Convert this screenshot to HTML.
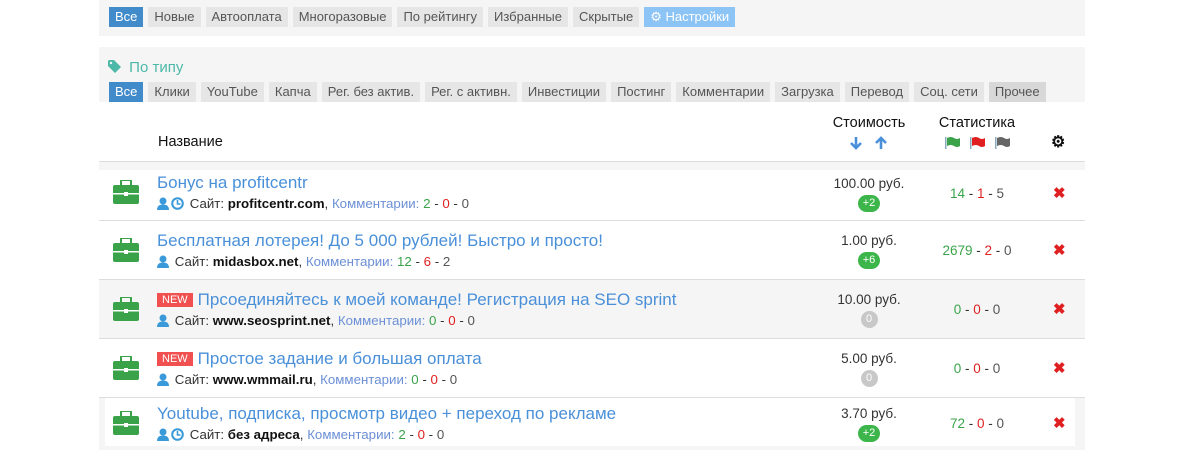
<!DOCTYPE html>
<html><head><meta charset="utf-8"><style>
*{margin:0;padding:0;box-sizing:border-box}
body{width:1200px;height:450px;background:#fff;font-family:"Liberation Sans",sans-serif;position:relative;overflow:hidden;color:#333}
.a{position:absolute}
.bar{display:flex;gap:5px}
.bar span{background:#e6e6e6;color:#555;font-size:13px;height:20px;line-height:20px;padding:0 6px;white-space:nowrap}
.bar span.on{background:#428bca;color:#fff}
.bar span.set{background:#8cc4f5;color:#fff}
.row{position:absolute;left:99px;width:986px;height:59px;border-top:1px solid #ddd}
.title{position:absolute;left:58px;top:5px;font-size:17px;color:#4a90d9;white-space:nowrap}
.sub{position:absolute;left:58px;top:29px;font-size:13.3px;color:#333;white-space:nowrap}
.sub b{color:#111}
.cm{color:#6b8fd6}
.g{color:#3aa34a}.r{color:#e02020}.d{color:#555}
.price{position:absolute;left:720px;width:100px;text-align:center;top:5px;font-size:13.5px;color:#333}
.badge{display:inline-block;margin-top:4px;height:17px;line-height:17px;min-width:17px;border-radius:9px;padding:0 5px;color:#fff;font-size:11px}
.stat{position:absolute;left:828px;width:100px;text-align:center;top:20px;font-size:13.5px}
.x{position:absolute;left:954px;top:18px;color:#e02020;font-size:15px;font-weight:bold}
.bc{position:absolute;left:14px;top:10px}
.new{background:#f05050;color:#fff;font-size:11px;padding:1px 5px;margin-right:5px;vertical-align:2px}
.ic{display:inline-block;vertical-align:-2px;margin-right:2px}
</style></head><body>
<svg width="0" height="0" style="position:absolute"><defs>
<g id="bc"><rect x="0" y="5" width="26" height="19" rx="2" fill="#3aa34a"/><rect x="8" y="0" width="10" height="6" rx="1" fill="none" stroke="#3aa34a" stroke-width="2"/><rect x="0" y="13" width="26" height="1.5" fill="#fff"/><rect x="11" y="12" width="4" height="4" fill="#fff"/></g>
<g id="pr"><circle cx="6" cy="4" r="3.5" fill="#3a9ad9"/><path d="M0 13 Q0 7.5 6 7.5 Q12 7.5 12 13 Z" fill="#3a9ad9"/></g>
<g id="ck"><circle cx="6.5" cy="6.5" r="5.3" fill="none" stroke="#3a9ad9" stroke-width="2"/><path d="M6.5 3v4h3" fill="none" stroke="#3a9ad9" stroke-width="1.6"/></g>
<g id="fl"><rect x="0" y="0" width="1.5" height="12" fill="#8ab"/><path d="M2 1 Q6 -1 9 1 Q12 3 15 1 V9 Q12 11 9 9 Q6 7 2 9Z"/></g>
</defs></svg>
<div class="a" style="left:99px;top:0;width:986px;height:36px;background:#f5f5f5"></div>
<div class="a bar" style="left:109px;top:7px"><span class="on">Все</span><span>Новые</span><span>Автооплата</span><span>Многоразовые</span><span>По рейтингу</span><span>Избранные</span><span>Скрытые</span><span class="set">⚙ Настройки</span></div>
<div class="a" style="left:99px;top:47px;width:986px;height:55px;background:#f5f5f5"></div>
<div class="a" style="left:108px;top:59px;font-size:15px;color:#4cb8a8"><svg class="ic" width="15" height="14" viewBox="0 0 15 14"><path d="M0 1V6L7 13L13 7L6 0H1Z" fill="#4cb8a8"/><circle cx="3" cy="3" r="1.2" fill="#f5f5f5"/></svg> По типу</div>
<div class="a bar" style="left:109px;top:82px;gap:5px"><span class="on">Все</span><span>Клики</span><span>YouTube</span><span>Капча</span><span>Рег. без актив.</span><span>Рег. с активн.</span><span>Инвестиции</span><span>Постинг</span><span>Комментарии</span><span>Загрузка</span><span>Перевод</span><span>Соц. сети</span><span style="background:#d8d8d8">Прочее</span></div>
<div class="a" style="left:158px;top:134px;font-size:14.5px;color:#111">Название</div>
<div class="a" style="left:819px;top:115px;width:100px;text-align:center;font-size:14.5px;color:#111">Стоимость</div>
<svg class="a" style="left:849px;top:136px" width="14" height="14" viewBox="0 0 14 14"><path d="M7 1V12M2 7L7 12L12 7" fill="none" stroke="#4a90d9" stroke-width="2.6"/></svg>
<svg class="a" style="left:874px;top:136px" width="14" height="14" viewBox="0 0 14 14"><path d="M7 13V2M2 7L7 2L12 7" fill="none" stroke="#4a90d9" stroke-width="2.6"/></svg>
<div class="a" style="left:927px;top:115px;width:100px;text-align:center;font-size:14.5px;color:#111">Статистика</div>
<svg class="a" style="left:945px;top:137px" width="16" height="12"><use href="#fl" fill="#3aa34a"/></svg>
<svg class="a" style="left:970px;top:137px" width="16" height="12"><use href="#fl" fill="#e02020"/></svg>
<svg class="a" style="left:995px;top:137px" width="16" height="12"><use href="#fl" fill="#666"/></svg>
<div class="a" style="left:1051px;top:132px;font-size:16px;color:#111;font-weight:bold">⚙</div>
<div class="a" style="left:99px;top:161px;width:986px;height:1px;background:#ddd"></div>
<div class="a" style="left:99px;top:162px;width:986px;height:8px;background:#f5f5f5"></div>

<div class="row" style="top:170px;border-top:none;height:50px">
<svg class="bc" width="26" height="25"><use href="#bc"/></svg>
<div class="title" style="top:3px">Бонус на profitcentr</div>
<div class="sub" style="top:26px"><svg class="ic" width="12" height="13"><use href="#pr"/></svg><svg class="ic" width="13" height="13"><use href="#ck"/></svg> Сайт: <b>profitcentr.com</b>, <span class="cm">Комментарии:</span> <span class="g">2</span> - <span class="r">0</span> - <span class="d">0</span></div>
<div class="price" style="top:6px">100.00 руб.<br><span class="badge" style="background:#3cb64a">+2</span></div>
<div class="stat" style="top:16px"><span class="g">14</span> - <span class="r">1</span> - <span class="d">5</span></div>
<div class="x" style="top:14px">✖</div>
</div>
<div class="row" style="top:220px">
<svg class="bc" width="26" height="25" style="top:17px"><use href="#bc"/></svg>
<div class="title" style="top:10px">Бесплатная лотерея! До 5 000 рублей! Быстро и просто!</div>
<div class="sub" style="top:33px"><svg class="ic" width="12" height="13"><use href="#pr"/></svg> Сайт: <b>midasbox.net</b>, <span class="cm">Комментарии:</span> <span class="g">12</span> - <span class="r">6</span> - <span class="d">2</span></div>
<div class="price" style="top:12px">1.00 руб.<br><span class="badge" style="background:#3cb64a">+6</span></div>
<div class="stat" style="top:22px"><span class="g">2679</span> - <span class="r">2</span> - <span class="d">0</span></div>
<div class="x" style="top:20px">✖</div>
</div>
<div class="row" style="top:279px;background:#f5f5f5">
<svg class="bc" width="26" height="25" style="top:17px"><use href="#bc"/></svg>
<div class="title" style="top:10px"><span class="new">NEW</span>Прсоединяйтесь к моей команде! Регистрация на SEO sprint</div>
<div class="sub" style="top:33px"><svg class="ic" width="12" height="13"><use href="#pr"/></svg> Сайт: <b>www.seosprint.net</b>, <span class="cm">Комментарии:</span> <span class="g">0</span> - <span class="r">0</span> - <span class="d">0</span></div>
<div class="price" style="top:12px">10.00 руб.<br><span class="badge" style="background:#c8c8c8">0</span></div>
<div class="stat" style="top:22px"><span class="g">0</span> - <span class="r">0</span> - <span class="d">0</span></div>
<div class="x" style="top:20px">✖</div>
</div>
<div class="row" style="top:338px">
<svg class="bc" width="26" height="25" style="top:17px"><use href="#bc"/></svg>
<div class="title" style="top:10px"><span class="new">NEW</span>Простое задание и большая оплата</div>
<div class="sub" style="top:33px"><svg class="ic" width="12" height="13"><use href="#pr"/></svg> Сайт: <b>www.wmmail.ru</b>, <span class="cm">Комментарии:</span> <span class="g">0</span> - <span class="r">0</span> - <span class="d">0</span></div>
<div class="price" style="top:12px">5.00 руб.<br><span class="badge" style="background:#c8c8c8">0</span></div>
<div class="stat" style="top:22px"><span class="g">0</span> - <span class="r">0</span> - <span class="d">0</span></div>
<div class="x" style="top:20px">✖</div>
</div>
<div class="a" style="left:99px;top:397px;width:986px;height:53px;background:#f5f5f5;border-top:1px solid #ddd"></div>
<div class="row" style="top:398px;left:105px;width:970px;height:48px;background:#fff;border:none">
<svg class="bc" width="26" height="25" style="left:8px;top:13px"><use href="#bc"/></svg>
<div class="title" style="left:52px;top:6px">Youtube, подписка, просмотр видео + переход по рекламе</div>
<div class="sub" style="left:52px;top:29px"><svg class="ic" width="12" height="13"><use href="#pr"/></svg><svg class="ic" width="13" height="13"><use href="#ck"/></svg> Сайт: <b>без адреса</b>, <span class="cm">Комментарии:</span> <span class="g">2</span> - <span class="r">0</span> - <span class="d">0</span></div>
<div class="price" style="left:714px;top:8px">3.70 руб.<br><span class="badge" style="background:#3cb64a">+2</span></div>
<div class="stat" style="left:822px;top:18px"><span class="g">72</span> - <span class="r">0</span> - <span class="d">0</span></div>
<div class="x" style="left:948px;top:16px">✖</div>
</div>
</body></html>
